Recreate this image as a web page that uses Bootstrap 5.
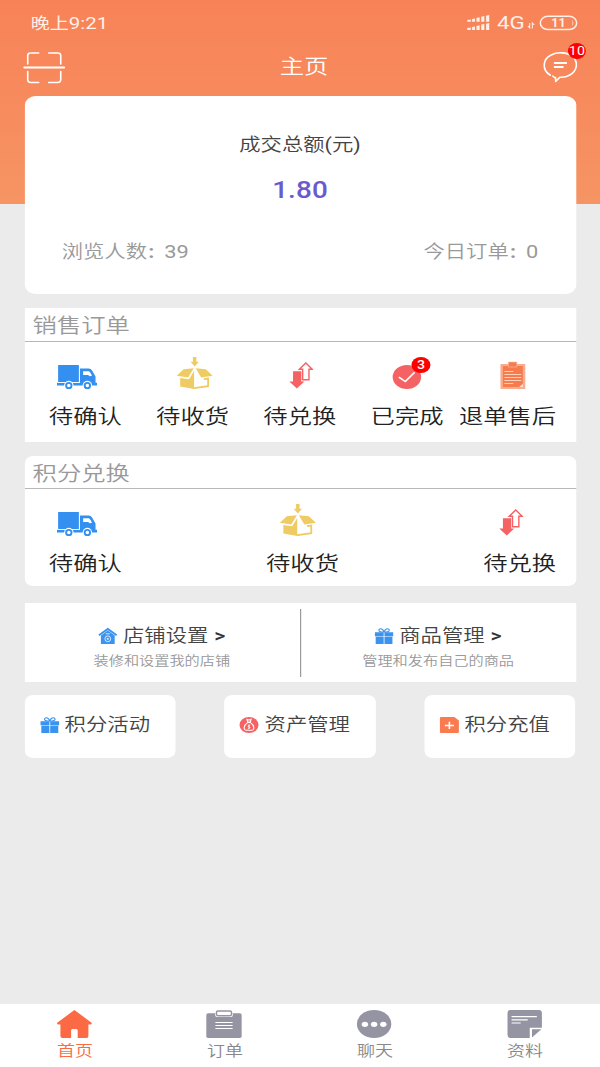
<!DOCTYPE html>
<html lang="zh-CN">
<head>
<meta charset="utf-8">
<meta name="viewport" content="width=device-width, initial-scale=1">
<title>主页</title>
<link href="https://cdn.jsdelivr.net/npm/bootstrap@5.3.0/dist/css/bootstrap.min.css" rel="stylesheet">
<style>
/* The app is laid out 506 units wide and stretched to the 600px window */
html,body{overflow:hidden}
body{margin:0;background:#ebebeb;font-family:Roboto,"Noto Sans CJK SC",sans-serif;color:#222}
.app{width:506px;height:1067px;transform:scaleX(1.18577);transform-origin:0 0;background:linear-gradient(#f88258,#f69463 204px,#ebebeb 204px)}
svg{display:block;flex:none;overflow:visible}
.statusbar{height:46px;padding:0 19.5px 0 26px;color:#fff0e8;font-size:17px;line-height:46px}
.clock{font-size:16px}
.clock span{font-size:17.2px}
.net{font-size:18.8px;margin-left:6px}
.topbar{height:50px;padding:0 19px 0 20.3px;color:#fff}
.topbar-title{font-size:20.5px;line-height:43px;font-weight:350}
.content{padding:0 20.5px;height:908px}
.panel{background:#fff}
.total{height:198px;border-radius:9px;padding:36px 31.5px 0}
.t18{font-size:18px;line-height:26px;color:#444;font-weight:350}
.t18 b{font-weight:400}
.amount{font-size:23.5px;line-height:30px;font-weight:500;color:#6a5acd;letter-spacing:.1px;margin-top:17px}
.visits{margin-top:34px;color:#999}
.visits b{font-size:18.4px}
.visits .sep{font-weight:700;margin:0 4px 0 1px}
.sec-title{height:34px;border-bottom:1px solid #b8b8b8;padding-left:7px;font-size:20.5px;line-height:37px;color:#999;font-weight:350}
.cells{padding:13px 16.5px 0 20.7px}
.cell{font-size:20.5px;white-space:nowrap;font-weight:350}
.cell .pic{height:34px}
.cell .lbl{line-height:30px;padding-top:13px}
.l8 svg{margin-left:-13.5px}.l4 svg{margin-left:-7px}.r0 svg{margin-left:.4px}.r2 svg{margin-left:3px}.r4 svg{margin-left:3.6px}.r5 svg{margin-left:8px}
.dot{position:absolute;background:#f00;color:#fff;border-radius:50%;width:16px;height:16px;font-size:12px;line-height:16px;text-align:center;font-weight:400}
.dot-chat{right:-7.5px;top:-9px;width:15.6px;letter-spacing:.2px}
.dot-done{right:-7.5px;top:-8.5px;font-weight:500}
.shop{height:79px;margin-top:17px}
.shop-half{padding-top:20px}
.shop-half svg{margin-right:5px}
.hint{font-size:12.8px;line-height:20px;color:#999;margin-top:2px;font-weight:350}
.vline{width:1px;height:68px;background:#999}
.gt{margin-left:5px;font-weight:500;color:#333}
.quick{margin-top:13px}
.tile{width:127.8px;height:63px;border-radius:7px;padding:0 0 3px 13px}
.tile svg{margin-right:5px}
.tabbar{height:63px;background:#fff;font-size:15.2px;color:#888;font-weight:350}
.tabbar .item{padding-top:6px;line-height:26px}
.tabbar .item svg{position:relative;left:-.6px}
.tabbar .on{color:#fb6a45}
</style>
</head>
<body>
<svg width="0" height="0" class="position-absolute" aria-hidden="true">
<symbol id="truck" viewBox="0 0 40 24" preserveAspectRatio="none"><g fill="#338ff0"><rect x="1.2" y="0" width="20.6" height="17" rx=".6"/><path d="M0 17.8H22.8V3.5H31.5Q33.8 3.6 35 5.8L38.3 11.5V17.8H40V20.6H0z"/></g><path d="M22.4 2V17.5H1" fill="none" stroke="#fff" stroke-width=".9"/><path d="M26 6.3H31.3Q32.6 6.5 33.5 8.2L34.8 10.7 32.5 11.2 31 10H26z" fill="#fff"/><g fill="#fff"><circle cx="11.8" cy="20.5" r="4.7"/><circle cx="30.2" cy="20.5" r="4.7"/></g><g fill="#fff" stroke="#338ff0" stroke-width="1.9"><circle cx="11.8" cy="20.6" r="2.7"/><circle cx="30.2" cy="20.6" r="2.7"/></g></symbol>
<symbol id="box" viewBox="0 0 36 32" preserveAspectRatio="none"><g fill="#efcb63"><path d="M16.2 0h3.5v4.8h2.5L18 9.6 13.8 4.8h2.4zM7 12.2L17 11.2 11.5 20.4 0 18.8zM29 12.2L19 11.2 24.5 20.4 36 18.8zM3.5 21L12.3 22.3 17.4 14V32L3.5 29.6z"/></g><path d="M17 31.2L31.4 29.1V21.5L27 22.2" fill="none" stroke="#efcb63" stroke-width="1.8"/></symbol>
<symbol id="swap" viewBox="0 0 24 27" preserveAspectRatio="none"><path d="M3.7 9.2H12V19.5H15L7.5 26.5 0 19.5H3.7z" fill="#f56264"/><path d="M16.5 .9L22.9 7.3H19.6V17.7H13.3V7.3H10z" fill="#fff" stroke="#f56264" stroke-width="1.4"/></symbol>
<symbol id="gift" viewBox="0 0 19 16" preserveAspectRatio="none"><g fill="#3a93ee"><path d="M0 4.2H9.1V8.2H0zM9.9 4.2H19V8.2H9.9zM1 8.8H9.1V16H1zM9.9 8.8H18V16H9.9z"/></g><path d="M9.5 3.7C6 4.5 3.2 3.2 4.6 1.3 6 .1 8.2 1.2 9.5 3.7 10.8 1.2 13 .1 14.4 1.3 15.8 3.2 13 4.5 9.5 3.7z" fill="none" stroke="#3a93ee" stroke-width="1.1"/></symbol>
</svg>

<div class="app d-flex flex-column">
  <div class="statusbar d-flex justify-content-between align-items-center">
    <span class="clock">晚上<span>9:21</span></span>
    <div class="d-flex align-items-center">
      <svg width="19" height="16" viewBox="0 0 23 16" preserveAspectRatio="none" fill="#fff0e8"><path d="M0 5l3.6-.6V6.7H0zM4.8 4l3.2-.6v3.3H4.8zM9.5 3l3.2-.7v4.4H9.5zM14.3 1.8l3.2-.7v5.6h-3.2zM19.3.7L22.5 0v6.7h-3.2zM0 12.9l3.6-.5v2.5H0zM4.8 12l3.2-.6v3.5H4.8zM9.5 11l3.2-.7v4.6H9.5zM14.3 9.6l3.2-.7v6h-3.2zM19.3 8.7l3.2-.7v6.9h-3.2z"/></svg>
      <span class="net">4G</span>
      <svg class="me-1 mt-1" width="6" height="7" viewBox="0 0 7 7" preserveAspectRatio="none" fill="none" stroke="#fff0e8" style="margin-left:2px"><path d="M2 1V6L.3 4M4.6 6.5V1L6.6 3"/></svg>
      <svg width="32" height="15" viewBox="0 0 38 15" preserveAspectRatio="none"><rect x=".8" y=".3" width="36.4" height="13.2" rx="7.5" fill="none" stroke="#fff0e8" stroke-width="1.5"/><path d="M32.5 3.5Q35.5 7 32.5 10.5z" fill="#fff" opacity=".45"/><text x="19" y="11.4" text-anchor="middle" font-size="12.5" font-weight="700" fill="#fff0e8">11</text></svg>
    </div>
  </div>
  <div class="topbar d-flex justify-content-between">
    <svg width="34.6" height="32" viewBox="0 0 41 32" preserveAspectRatio="none" fill="none" stroke="#fff" stroke-width="1.6" stroke-linecap="round" style="margin-top:6px"><path d="M4 12V3.5Q4 1 7 1H15M25 1H34Q37 1 37 3.5V12M4 19.5V27.5Q4 30.5 7 30.5H15M25 30.5H34Q37 30.5 37 27.5V19.5"/><path d="M.5 15.5H40.5" stroke-width="1.9"/></svg>
    <span class="topbar-title">主页</span>
    <div class="position-relative align-self-start" style="margin-top:5.5px">
      <svg width="29" height="32" viewBox="0 0 34 32" preserveAspectRatio="none" fill="none" stroke="#fff" stroke-width="1.6" stroke-linecap="round" stroke-linejoin="round"><path d="M7.2 23.2C-2 17.8 .2 6.8 7.5 3.2 14-.3 23.5 0 29 4.4 35.5 10.2 33.5 19 26.5 23 23.3 24.8 19 25.5 16.5 25.2L12.5 29.5 12.3 25.5M9.5 24L12 26"/><path d="M11.5 11H22.8M11.5 15H19.5" stroke-width="1.9"/></svg>
      <span class="dot dot-chat">10</span>
    </div>
  </div>

  <div class="content">
    <div class="panel total">
      <div class="t18 text-center">成交总额<b>(</b>元<b>)</b></div>
      <div class="amount text-center">1.80</div>
      <div class="t18 visits d-flex justify-content-between"><span>浏览人数<b class="sep">:</b> <b>39</b></span><span>今日订单<b class="sep">:</b> <b>0</b></span></div>
    </div>

    <div class="panel" style="height:134px;margin-top:14px">
      <div class="sec-title">销售订单</div>
      <div class="cells d-flex justify-content-between">
        <div class="cell"><div class="pic d-flex justify-content-center align-items-end l8"><svg width="34" height="24"><use href="#truck"/></svg></div><div class="lbl">待确认</div></div>
        <div class="cell"><div class="pic d-flex justify-content-center align-items-end r2"><svg width="30.4" height="32"><use href="#box"/></svg></div><div class="lbl">待收货</div></div>
        <div class="cell"><div class="pic d-flex justify-content-center align-items-end r4"><svg width="20.3" height="27"><use href="#swap"/></svg></div><div class="lbl">待兑换</div></div>
        <div class="cell"><div class="pic d-flex justify-content-center align-items-end r0"><div class="position-relative"><svg width="24.3" height="24" viewBox="0 0 24 24"><circle cx="12" cy="12" r="12" fill="#f56264"/><path d="M5.2 12.2L10.7 16.5 18.5 7.3" fill="none" stroke="#fff" stroke-width="1.5"/></svg><span class="dot dot-done">3</span></div></div><div class="lbl">已完成</div></div>
        <div class="cell" style="margin-left:-16px"><div class="pic d-flex justify-content-center align-items-end r5"><svg width="21" height="27" viewBox="0 0 25 27" preserveAspectRatio="none"><rect y="2" width="25" height="25" rx=".8" fill="#faad8d"/><path d="M2.5 4H22.5V22L19 25H2.5z" fill="#f67b4e"/><path d="M8 0h8.5v5H8z" fill="#f67b4e" stroke="#fac0a5" stroke-width=".6"/><path d="M4 9.5H13M4 12.5H21M4 15.5H21M4 18.5H21M4 21.5H13" stroke="#ffd1bb" stroke-width="1"/><path d="M22.5 22V25H19z" fill="#ffe1d3"/></svg></div><div class="lbl">退单售后</div></div>
      </div>
    </div>

    <div class="panel" style="height:130px;margin-top:14px;border-radius:7px">
      <div class="sec-title" style="height:33px">积分兑换</div>
      <div class="cells d-flex justify-content-between">
        <div class="cell"><div class="pic d-flex justify-content-center align-items-end l8"><svg width="34" height="24"><use href="#truck"/></svg></div><div class="lbl">待确认</div></div>
        <div class="cell"><div class="pic d-flex justify-content-center align-items-end l4"><svg width="30.4" height="32"><use href="#box"/></svg></div><div class="lbl">待收货</div></div>
        <div class="cell"><div class="pic d-flex justify-content-center align-items-end l8"><svg width="20.3" height="27"><use href="#swap"/></svg></div><div class="lbl">待兑换</div></div>
      </div>
    </div>

    <div class="panel shop d-flex align-items-center">
      <div class="shop-half col align-self-stretch text-center">
        <div class="t18 d-flex justify-content-center align-items-center"><svg width="15.8" height="16" viewBox="0 0 19 16" preserveAspectRatio="none"><path d="M.5 7.3L9.5.9 18.5 7.3" fill="none" stroke="#3a93ee" stroke-width="1.8"/><path d="M2.5 7.6L9.5 2.6 16.5 7.6V16H2.5z" fill="#3a93ee"/><path d="M7.5 5.8H11.5" stroke="#d6eaff"/><circle cx="9.5" cy="10.8" r="2.9" fill="none" stroke="#d6eaff"/><circle cx="9.5" cy="10.8" r="1.1" fill="#d6eaff"/></svg>店铺设置<span class="gt">&gt;</span></div>
        <div class="hint">装修和设置我的店铺</div>
      </div>
      <div class="vline"></div>
      <div class="shop-half col align-self-stretch text-center">
        <div class="t18 d-flex justify-content-center align-items-center"><svg width="15.8" height="16"><use href="#gift"/></svg>商品管理<span class="gt">&gt;</span></div>
        <div class="hint">管理和发布自己的商品</div>
      </div>
    </div>

    <div class="quick d-flex justify-content-between">
      <div class="panel tile t18 d-flex align-items-center"><svg width="16" height="16"><use href="#gift"/></svg>积分活动</div>
      <div class="panel tile t18 d-flex align-items-center"><svg width="16" height="16" viewBox="0 0 16 16"><circle cx="8" cy="8" r="8" fill="#f56264"/><path d="M6.2 2.3L8 3 9.8 2.3 9.1 5H6.9zM6.8 5.6C3.2 8.4 3 13.2 6 13.2H10C13 13.2 12.8 8.4 9.2 5.6z" fill="none" stroke="#fff" stroke-width=".9"/><path d="M9 8.2Q7 7.8 7.2 9T8.7 10.2 7 11.6M8 7.5V12" fill="none" stroke="#fff" stroke-width=".7"/></svg>资产管理</div>
      <div class="panel tile t18 d-flex align-items-center"><svg width="16" height="16" viewBox="0 0 19 16" preserveAspectRatio="none"><path d="M1 0H14.5L19 3.5V15Q19 16 18 16H1Q0 16 0 15V1Q0 0 1 0z" fill="#fa7b50"/><path d="M5 8.5H14M9.5 4.8V12" stroke="#fff" stroke-width="1.6"/></svg>积分充值</div>
    </div>
  </div>

  <div class="tabbar d-flex text-center">
    <div class="item on col"><svg class="mx-auto" width="29.5" height="28" viewBox="0 0 35 28" preserveAspectRatio="none"><path d="M17.5 0L35 13Q35 14.5 33 14.5H31.5V26Q31.5 28 29.5 28H20.8V20.5Q20.8 19 19.5 19H15.5Q14.2 19 14.2 20.5V28H5.5Q3.5 28 3.5 26V14.5H2Q0 14.5 0 13z" fill="#fb6a45"/></svg>首页</div>
    <div class="item col"><svg class="mx-auto" width="29.8" height="28" viewBox="0 0 35 28" preserveAspectRatio="none"><rect y="3.2" width="35" height="24.8" rx="1.8" fill="#9594a3"/><rect x="8.7" y=".3" width="17.6" height="6.6" rx="2" fill="#fff"/><rect x="10" y="1" width="15" height="4.8" rx="1.7" fill="#fff" stroke="#9594a3" stroke-width="1.5"/><path d="M9 12.5H26M9 15.5H26M9 18.5H26" stroke="#fff" stroke-width="1"/></svg>订单</div>
    <div class="item col"><svg class="mx-auto" width="29" height="28" viewBox="0 0 28 28" preserveAspectRatio="none"><circle cx="14" cy="14" r="14" fill="#9594a3"/><g fill="#fff"><circle cx="6.5" cy="14.3" r="2.6"/><circle cx="14" cy="14.3" r="2.6"/><circle cx="21.5" cy="14.3" r="2.6"/></g></svg>聊天</div>
    <div class="item col"><svg class="mx-auto" width="29" height="28" viewBox="0 0 34 28" preserveAspectRatio="none"><path d="M3 0H31Q34 0 34 3V17.8H22V28H3Q0 28 0 25V3Q0 0 3 0z" fill="#9594a3"/><path d="M24.2 27.5V19.3H33.5z" fill="#9594a3"/><path d="M4 6.7H29M4 9.8H20M4 13H13" stroke="#fff" stroke-width="1.2"/></svg>资料</div>
  </div>
</div>
<script src="https://cdn.jsdelivr.net/npm/bootstrap@5.3.0/dist/js/bootstrap.bundle.min.js"></script>
</body>
</html>
